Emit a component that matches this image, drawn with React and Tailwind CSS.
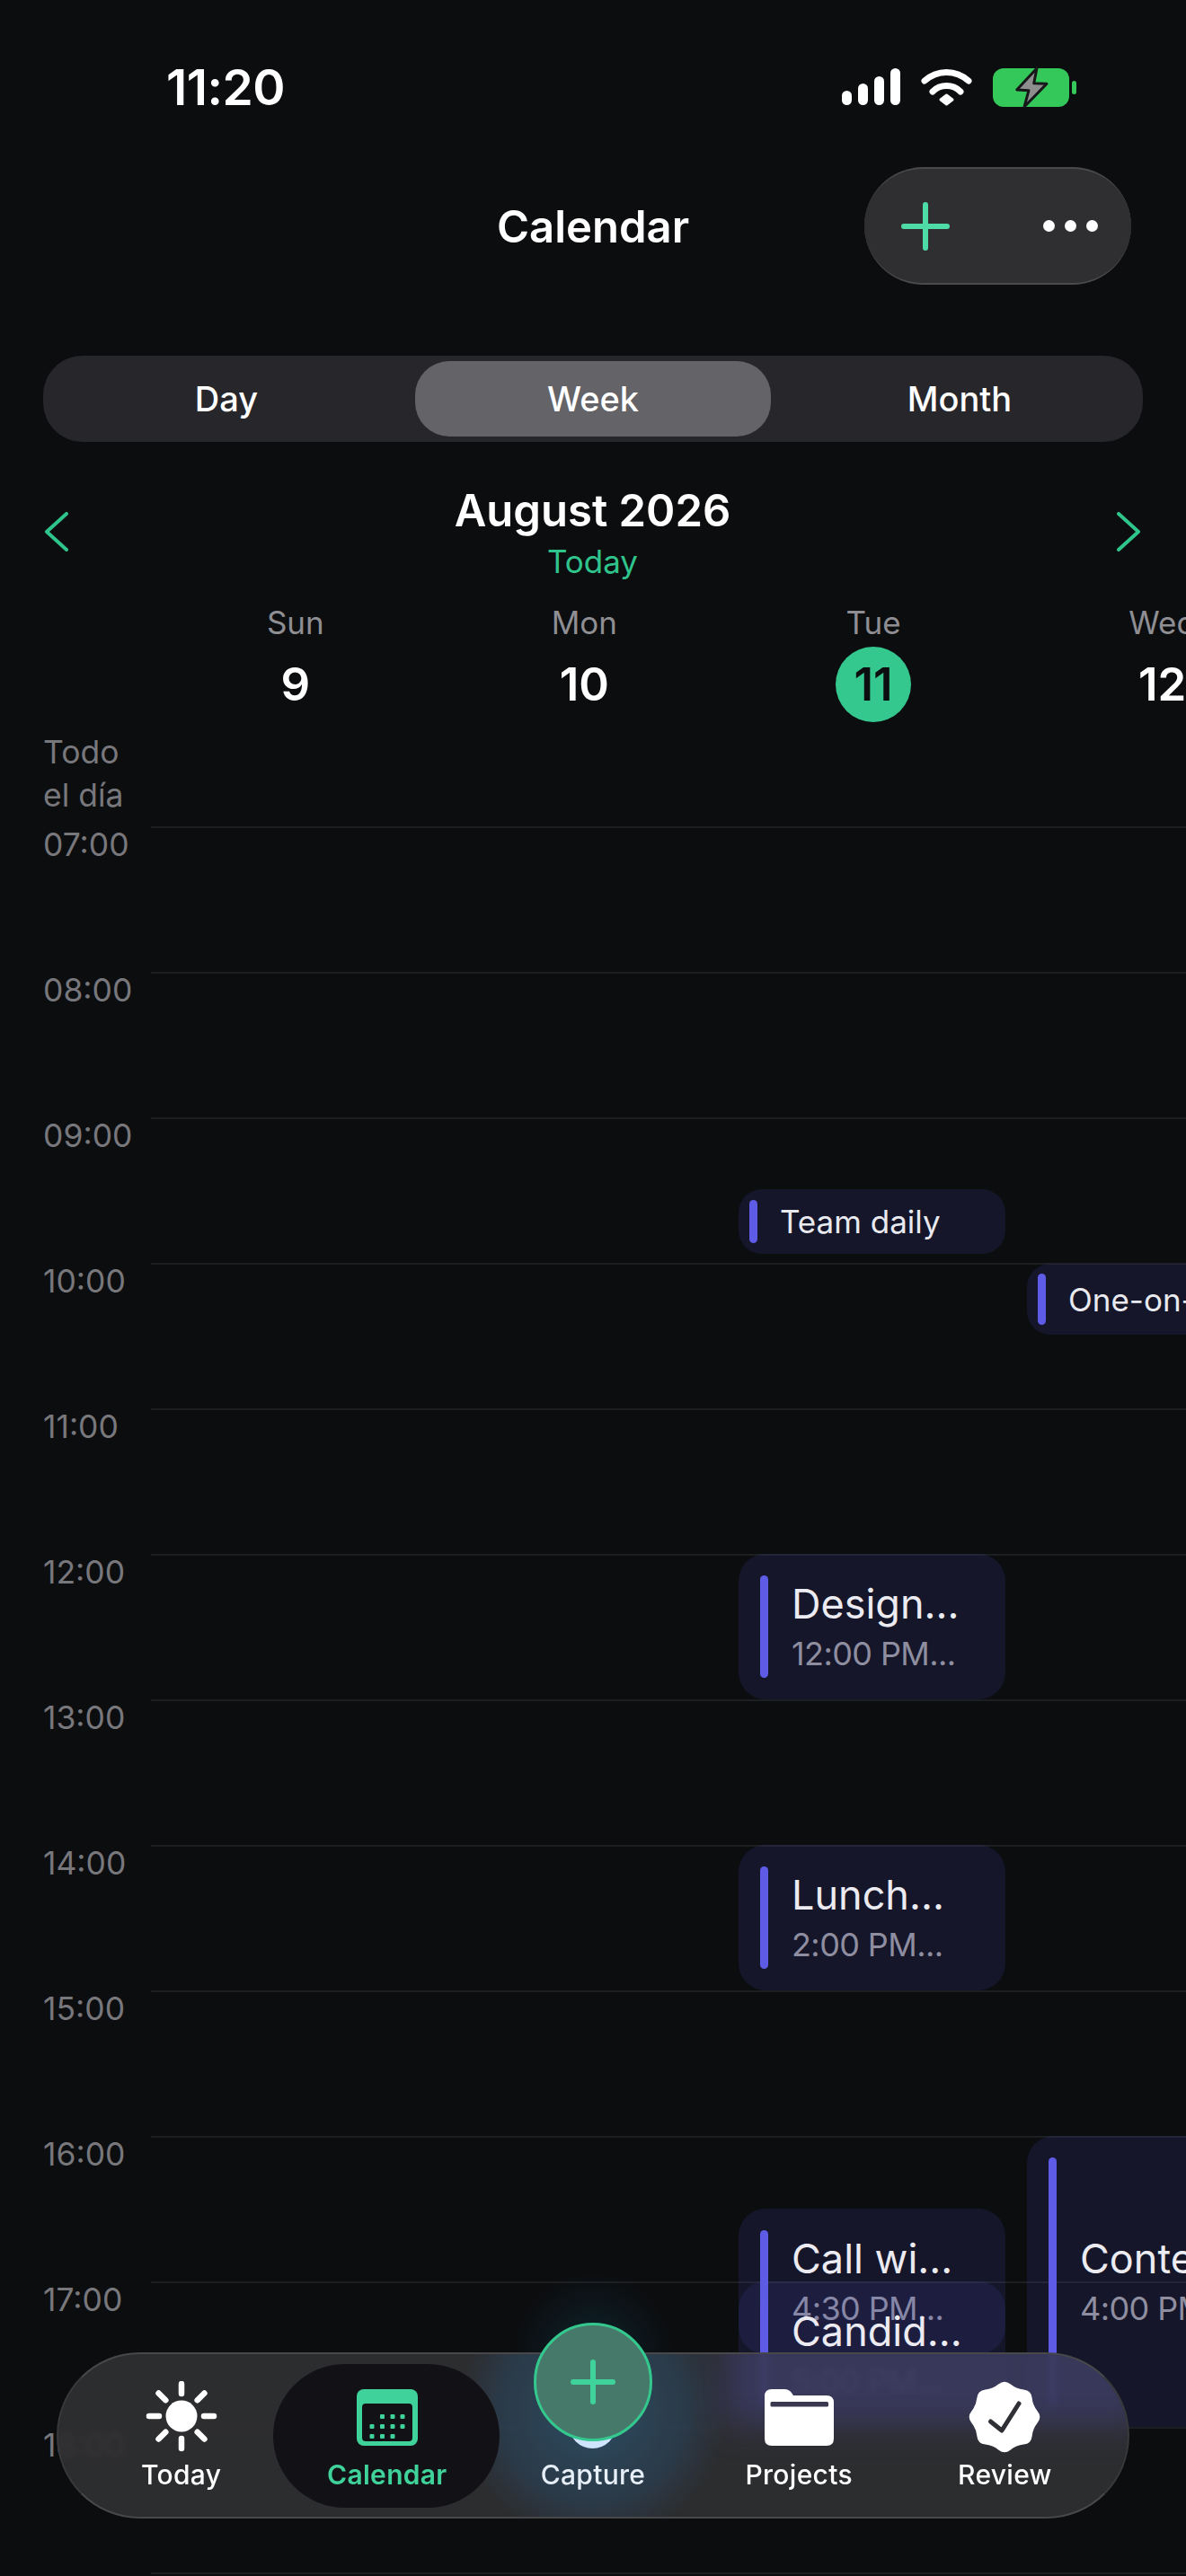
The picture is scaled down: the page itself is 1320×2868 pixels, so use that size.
import React from "react";

const font = { fontFamily: "Inter, 'Noto Sans', sans-serif" };

const hours = ["07:00","08:00","09:00","10:00","11:00","12:00","13:00","14:00","15:00","16:00","17:00","18:00"];

const days = [
  { name: "Sun", num: "9" },
  { name: "Mon", num: "10" },
  { name: "Tue", num: "11", today: true },
  { name: "Wed", num: "12" },
];

function badgePath(cx, cy) {
  const pts = [];
  for (let i = 0; i < 16; i++) {
    const r = i % 2 === 0 ? 42 : 34;
    const a = (i * Math.PI) / 8 - Math.PI / 2;
    pts.push([cx + r * Math.cos(a), cy + r * Math.sin(a)]);
  }
  const mid = (a, b) => [(a[0] + b[0]) / 2, (a[1] + b[1]) / 2];
  const start = mid(pts[15], pts[0]);
  let d = `M${start[0].toFixed(1)} ${start[1].toFixed(1)}`;
  pts.forEach((p, i) => {
    const m = mid(p, pts[(i + 1) % 16]);
    d += `Q${p[0].toFixed(1)} ${p[1].toFixed(1)} ${m[0].toFixed(1)} ${m[1].toFixed(1)}`;
  });
  return d + "Z";
}

function StatusIcons() {
  return (
    <div className="flex items-start">
      <svg width="65" height="41" viewBox="0 0 65 41" fill="#fff">
        <rect x="0" y="25" width="11" height="16" rx="5.5" />
        <rect x="18" y="17" width="11" height="24" rx="5.5" />
        <rect x="36" y="9" width="11" height="32" rx="5.5" />
        <rect x="54" y="0" width="11" height="41" rx="5.5" />
      </svg>
      <svg className="ml-[23px]" width="57" height="42" viewBox="0 0 57 42" fill="none" stroke="#fff" strokeLinecap="round">
        <path d="M4 14A36 36 0 0 1 53 14" strokeWidth="7" />
        <path d="M13 26A22 22 0 0 1 44 26" strokeWidth="7" />
        <path d="M22 35 28.5 30 35 35 28.5 40Z" fill="#fff" strokeWidth="3" strokeLinejoin="round" />
      </svg>
      <svg className="ml-[23px] overflow-visible" width="93" height="43" viewBox="0 0 93 43">
        <rect x="0" y="0" width="85" height="43" rx="12" fill="#34c759" />
        <rect x="88" y="14" width="5" height="15" rx="2.5" fill="#34c759" />
        <path d="M49 0 26.7 24 40 24.7 35 43 60 17.3 45.7 16.7Z" fill="#8e8e8e" stroke="#16181a" strokeWidth="3" strokeLinejoin="round" />
      </svg>
    </div>
  );
}

function Event({ className, title, time, small }) {
  return (
    <div className={`absolute flex overflow-hidden bg-[#5856d6]/13 ${className}`}>
      <div className="w-[9px] shrink-0 rounded-full bg-[#5e5ce6]" />
      <div className={`flex min-w-0 flex-col justify-center whitespace-nowrap ${small ? "ml-[25px]" : "ml-[26px]"}`}>
        <p className={small ? "text-[35px] leading-[44px] text-[#e9e9f0]" : "text-[45px] leading-[54px] text-[#ecebf2]"}>{title}</p>
        {time && <p className="mt-[6px] text-[36px] leading-[44px] tracking-[-0.6px] text-[#8e8ea0]">{time}</p>}
      </div>
    </div>
  );
}

function SunIcon() {
  const rays = [0, 45, 90, 135, 180, 225, 270, 315];
  return (
    <svg width="80" height="80" viewBox="0 0 80 80">
      <circle cx="40" cy="39" r="17.5" fill="#fff" />
      {rays.map((a) => (
        <line
          key={a}
          x1="40"
          y1="14"
          x2="40"
          y2="3"
          stroke="#fff"
          strokeWidth="6.5"
          strokeLinecap="round"
          transform={`rotate(${a} 40 39)`}
        />
      ))}
    </svg>
  );
}

function CalendarIcon() {
  const dots = [
    [17, 26], [28.5, 26], [40, 26], [51, 26],
    [17, 37], [28.5, 37], [40, 37],
    [28.5, 15], [40, 15], [51, 15],
  ];
  return (
    <svg width="68" height="63" viewBox="0 0 68 63">
      <rect width="68" height="63" rx="8" fill="#3fd29b" />
      <rect x="6" y="16" width="56" height="42" rx="4" fill="#121216" />
      {dots.map(([x, y]) => (
        <rect key={`${x}-${y}`} x={x - 2.5} y={y + 13} width="5" height="5" rx="1" fill="#3fd29b" />
      ))}
    </svg>
  );
}

function FolderIcon() {
  return (
    <svg width="77" height="63" viewBox="0 0 77 63">
      <path d="M8 0H22Q27 0 30 4L32 7H69Q77 7 77 15V55Q77 63 69 63H8Q0 63 0 55V8Q0 0 8 0Z" fill="#fff" />
      <rect x="6.5" y="14" width="64.5" height="5.5" rx="1.5" fill="#3a3850" />
    </svg>
  );
}

function BadgeIcon() {
  return (
    <svg width="80" height="80" viewBox="0 0 80 80">
      <path d={badgePath(40, 40)} fill="#fff" />
      <path d="M24.5 45 37 55 56 25" fill="none" stroke="#2f2f36" strokeWidth="5" strokeLinecap="round" strokeLinejoin="round" />
    </svg>
  );
}

function TabItem({ label, active, capture, children }) {
  let color = "text-white font-medium";
  if (active) color = "text-[#3fd29b] font-semibold";
  if (capture) color = "text-[#e6eef8] font-medium";
  return (
    <div className="relative flex flex-col items-center pt-[32px]">
      <div className="flex h-[80px] items-center justify-center">{children}</div>
      <span className={`mt-[5px] text-[30px] leading-[38px] tracking-[0.3px] ${color}`}>{label}</span>
    </div>
  );
}

export default function App() {
  return (
    <div style={font} className="relative h-[2868px] w-[1320px] overflow-hidden bg-[#0c0d0f] text-white">
      {/* Status bar */}
      <div className="flex h-[186px] items-start justify-between pl-[185px] pr-[122px] pt-[76px]">
        <span className="text-[55px] font-semibold leading-[42px] tracking-[-0.5px]">11:20</span>
        <StatusIcons />
      </div>

      {/* Title row */}
      <div className="grid h-[131px] grid-cols-[1fr_auto_1fr] items-center">
        <div />
        <h1 className="pt-[2px] text-[49px] font-semibold leading-[60px]">Calendar</h1>
        <div className="flex justify-end pr-[61px]">
          <div className="flex h-[131px] w-[297px] items-center justify-between rounded-full border-t-2 border-b-2 border-[#4a4a4c] bg-[#2f2f31] pl-[41px] pr-[37px]">
            <svg width="54" height="54" viewBox="0 0 54 54" stroke="#4edba6" strokeWidth="6" strokeLinecap="round">
              <path d="M27 3V51M3 27H51" />
            </svg>
            <div className="flex gap-[11px]">
              <span className="size-[13px] rounded-full bg-white" />
              <span className="size-[13px] rounded-full bg-white" />
              <span className="size-[13px] rounded-full bg-white" />
            </div>
          </div>
        </div>
      </div>

      {/* Day / Week / Month */}
      <div className="ml-[48px] mt-[79px] grid h-[96px] w-[1224px] grid-cols-3 rounded-[44px] bg-[#26262b] text-[38px] font-medium">
        <div className="flex items-center justify-center">Day</div>
        <div className="p-[6px]">
          <div className="flex h-full items-center justify-center rounded-[38px] bg-[#636368]">Week</div>
        </div>
        <div className="flex items-center justify-center">Month</div>
      </div>

      {/* Month header */}
      <div className="mt-[48px] flex h-[108px] items-center justify-between pl-[50px] pr-[51px]">
        <svg className="mb-[5px]" width="26" height="44" viewBox="0 0 26 44" fill="none" stroke="#30c48d" strokeWidth="4" strokeLinecap="round" strokeLinejoin="round">
          <path d="M24 2 2 22 24 42" />
        </svg>
        <div className="flex flex-col items-center">
          <p className="text-[49px] font-semibold leading-[56px]">August 2026</p>
          <p className="mt-[6px] text-[35px] leading-[44px] text-[#30c48d]">Today</p>
        </div>
        <svg className="mb-[5px]" width="26" height="44" viewBox="0 0 26 44" fill="none" stroke="#30c48d" strokeWidth="4" strokeLinecap="round" strokeLinejoin="round">
          <path d="M2 2 24 22 2 42" />
        </svg>
      </div>

      {/* Week days */}
      <div className="ml-[168px] mt-[23px] grid grid-cols-[repeat(4,321.6px)]">
        {days.map((d) => (
          <div key={d.name} className="flex flex-col items-center">
            <span className="text-[35px] leading-[44px] text-[#8e8e93]">{d.name}</span>
            <span
              className={
                d.today
                  ? "mt-[5px] flex size-[84px] items-center justify-center rounded-full bg-[#34c88f] text-[51px] font-semibold text-[#0c0d0f]"
                  : "mt-[5px] flex size-[84px] items-center justify-center text-[51px] font-semibold"
              }
            >
              {d.num}
            </span>
          </div>
        ))}
      </div>

      {/* All-day */}
      <div className="h-[116px] pl-[48px] pt-[10px] text-[35.5px] leading-[48px] text-[#77777c]">
        <p>Todo</p>
        <p>el día</p>
      </div>

      {/* Hour grid */}
      <div className="relative">
        {hours.map((h) => (
          <div key={h} className="flex h-[162px]">
            <div className="w-[168px] pl-[48px] text-[35.5px] leading-[42px] text-[#77777c]">{h}</div>
            <div className="flex-1 border-t-2 border-[#1d1e21]" />
          </div>
        ))}
        <div className="ml-[168px] h-[2px] bg-[#1d1e21]" />

        <Event small title="Team daily" className="left-[822px] top-[404px] h-[72px] w-[297px] rounded-[26px] px-[12px] py-[12px]" />
        <Event small title="One-on-one" className="left-[1143px] top-[487px] h-[79px] w-[297px] rounded-[26px] px-[12px] py-[11px]" />
        <Event title="Design..." time="12:00 PM..." className="left-[822px] top-[810px] h-[162px] w-[297px] rounded-[30px] px-[24px] py-[24px]" />
        <Event title="Lunch..." time="2:00 PM..." className="left-[822px] top-[1134px] h-[162px] w-[297px] rounded-[30px] px-[24px] py-[24px]" />
        <Event title="Call wi..." time="4:30 PM..." className="left-[822px] top-[1539px] h-[162px] w-[297px] rounded-[30px] px-[24px] py-[24px]" />
        <Event title="Candid..." time="5:00 PM..." className="left-[822px] top-[1620px] h-[162px] w-[297px] rounded-[30px] px-[24px] py-[24px]" />
        <Event title="Content..." time="4:00 PM..." className="left-[1143px] top-[1458px] h-[324px] w-[297px] rounded-[30px] px-[24px] py-[24px]" />
      </div>

      {/* Tab bar */}
      <nav className="absolute left-[63px] top-[2619px] h-[185px] w-[1194px]">
        <div className="absolute left-[417px] top-[-90px] h-[90px] w-[360px] bg-[radial-gradient(circle_at_50%_100%,rgba(16,110,130,0.26)_0%,rgba(16,90,120,0.1)_28%,transparent_44%)]" />
        <div className="absolute inset-0 overflow-hidden rounded-full border-2 border-[#48484a] border-x-[#39393b] bg-[#303032]/92 backdrop-blur-[3px]">
          <div className="absolute left-[740px] right-[-20px] top-[-30px] h-[110px] bg-[#5856d6]/25 blur-[18px]" />
          <div className="absolute left-[445px] top-[-89px] size-[300px] rounded-full bg-[radial-gradient(circle,rgba(40,120,170,0.42)_0%,rgba(40,100,150,0.24)_50%,transparent_70%)]" />
        </div>
        <div className="absolute left-[241px] top-[13px] h-[160px] w-[252px] rounded-[80px] bg-[#121216]" />

        <div className="relative grid h-full grid-cols-5 px-[24px]">
          <TabItem label="Today"><SunIcon /></TabItem>
          <TabItem label="Calendar" active><CalendarIcon /></TabItem>
          <TabItem label="Capture" capture />
          <TabItem label="Projects"><FolderIcon /></TabItem>
          <TabItem label="Review"><BadgeIcon /></TabItem>
        </div>

        <div className="absolute left-[570px] top-[54px] size-[53px] rounded-full bg-[#cfe4ff]" />
        <div className="absolute left-[531px] top-[-33px] flex size-[132px] items-center justify-center rounded-full border-[3px] border-[#34c88f] bg-[#47796a]">
          <svg width="50" height="50" viewBox="0 0 50 50" stroke="#3fd29b" strokeWidth="6" strokeLinecap="round">
            <path d="M25 3V47M3 25H47" />
          </svg>
        </div>
      </nav>
    </div>
  );
}
